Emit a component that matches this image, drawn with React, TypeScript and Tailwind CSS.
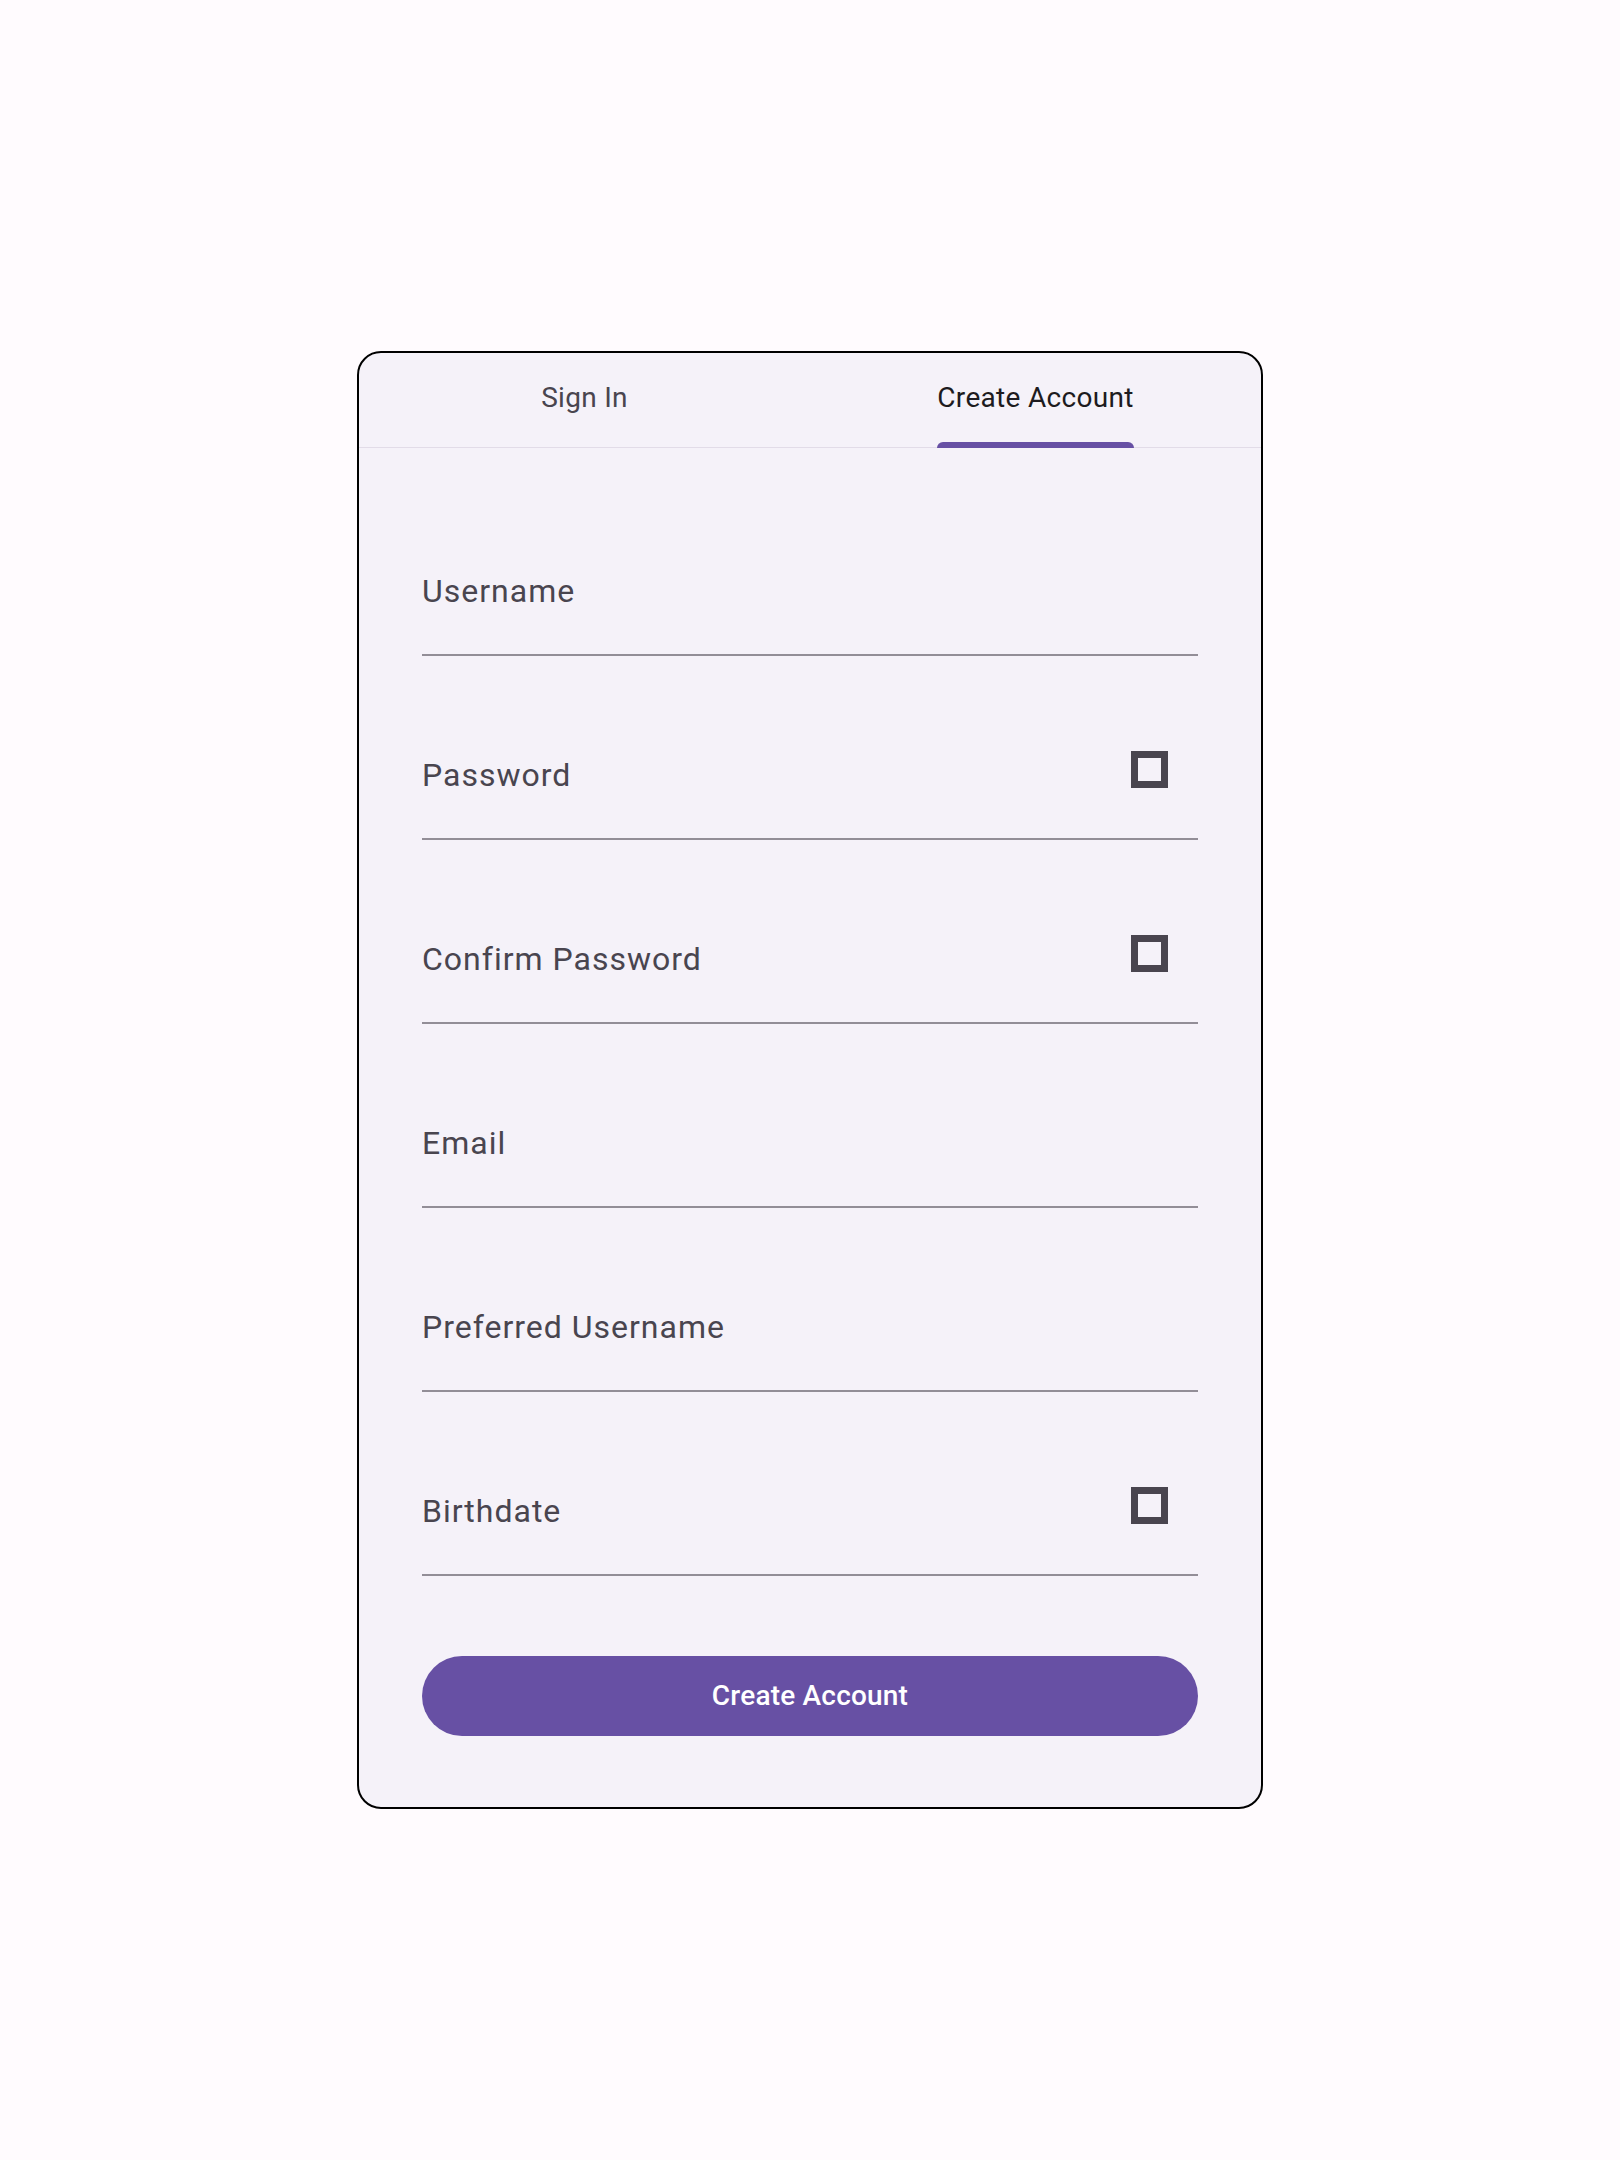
import { useState } from "react";

type Field = {
  label: string;
  icon?: boolean;
};

const FIELDS: Field[] = [
  { label: "Username" },
  { label: "Password", icon: true },
  { label: "Confirm Password", icon: true },
  { label: "Email" },
  { label: "Preferred Username" },
  { label: "Birthdate", icon: true },
];

const TABS = ["Sign In", "Create Account"];

const FormField = ({ label, icon }: Field) => (
  <div className="h-[112px] flex items-center justify-between pb-[17px] border-b-2 border-[#79747e]/80">
    <span className="text-[32px] leading-[48px] tracking-[1px] text-[#49454f]">
      {label}
    </span>
    {icon && (
      <span className="w-[37px] h-[37px] border-[7px] border-[#49454f] mb-[10px] mr-[30px]" />
    )}
  </div>
);

const App = () => {
  const [activeTab, setActiveTab] = useState(1);

  return (
    <div
      className="min-h-screen w-full flex items-center justify-center bg-[#fffbfe]"
      style={{ fontFamily: "Roboto, 'Noto Sans', sans-serif" }}
    >
      <div className="w-[906px] border-2 border-black rounded-[24px] bg-[#f5f2f9] overflow-hidden">
        <div className="h-[95px] flex border-b border-[#e2dce8]">
          {TABS.map((tab, index) => (
            <button
              key={tab}
              onClick={() => setActiveTab(index)}
              className="flex-1 h-full flex items-center justify-center pb-[5px]"
            >
              <span
                className={`relative h-full flex items-center text-[28px] leading-[40px] font-normal tracking-[0.3px] ${
                  activeTab === index ? "text-[#1d1b20]" : "text-[#49454f]"
                }`}
              >
                {tab}
                {activeTab === index && (
                  <span className="absolute left-0 right-0 -bottom-[6px] h-[6px] rounded-t-[6px] bg-[#6750a4]" />
                )}
              </span>
            </button>
          ))}
        </div>

        <div className="px-[63px] pt-[96px] pb-[71px] flex flex-col">
          <div className="flex flex-col gap-[72px]">
            {FIELDS.map((field) => (
              <FormField key={field.label} {...field} />
            ))}
          </div>

          <button className="mt-[80px] h-[80px] w-full rounded-full bg-[#6750a4] text-white text-[28px] font-medium tracking-[0.2px]">
            Create Account
          </button>
        </div>
      </div>
    </div>
  );
};

export default App;
